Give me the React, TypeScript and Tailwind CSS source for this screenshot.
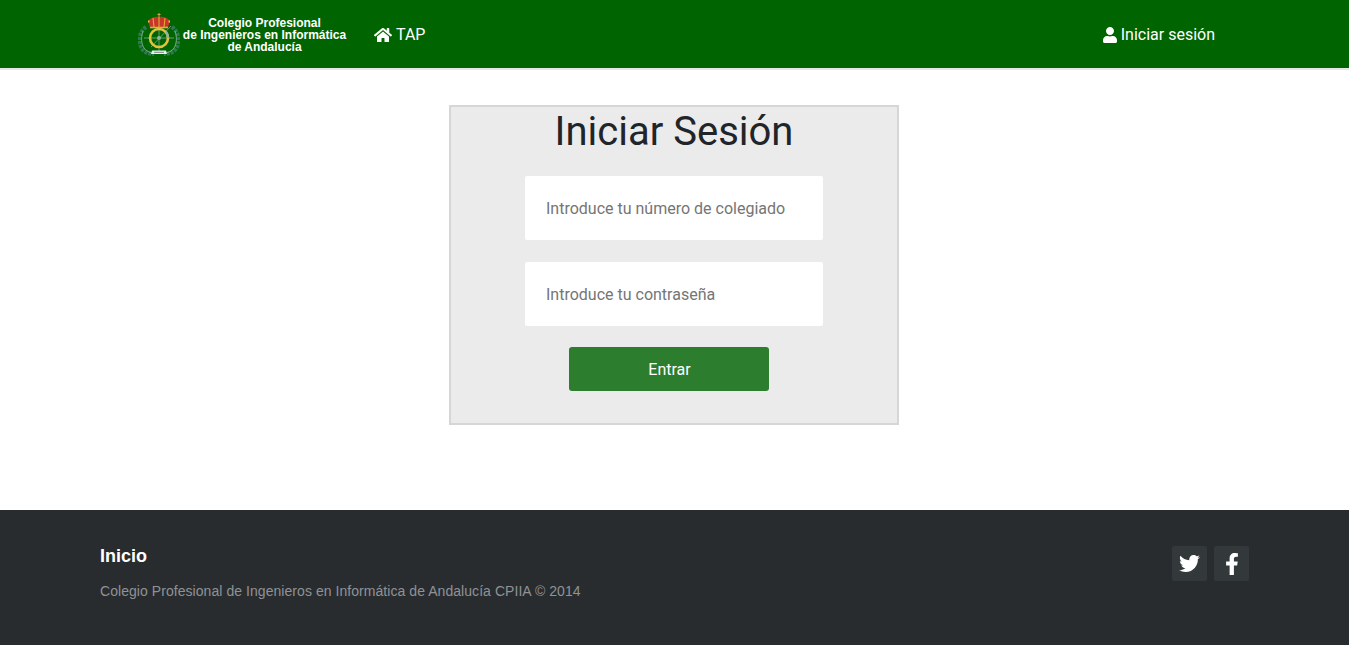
import { FaFacebookF, FaHome, FaTwitter, FaUser } from "react-icons/fa"

function Crest() {
  return (
    <svg width="42" height="44" viewBox="0 0 42 44" fill="none" className="ml-[1px] mt-[1px]">
      {/* laurel */}
      <path d="M8 14C1 19-1 30 5 37c3 3 7 4 11 4" stroke="#2f7a52" strokeWidth="4" strokeDasharray="3 1" />
      <path d="M34 14c7 5 9 16 3 23-3 3-7 4-11 4" stroke="#2f7a52" strokeWidth="4" strokeDasharray="3 1" />
      <path d="M5 18c-2 6-2 12 1 17 2 3 5 4 8 5M37 18c2 6 2 12-1 17-2 3-5 4-8 5" stroke="#9cc4ae" strokeWidth="0.7" />
      {/* crown */}
      <path d="M21 0v4M19.500 1.500h3" stroke="#d8a83a" strokeWidth="1" />
      <path d="M10 8c2-3 7-5 11-4 4-1 9 1 11 4l-2 6.500H12z" fill="#c9352a" />
      <path d="M15 5l1 9M21 4v10M27 5l-1 9" stroke="#dcae34" strokeWidth="1.100" />
      <path d="M10 8.500h1.500M30.500 8.500H32" stroke="#e8c24a" strokeWidth="2" />
      <path d="M12 14.500h18" stroke="#d9b23e" strokeWidth="1.600" />
      {/* ring and crosshair */}
      <path d="M6 25h30M21 14v24M13 34l20-21" stroke="#8fb5a0" strokeWidth="0.7" />
      <circle cx="21" cy="25" r="9" stroke="#e2c23e" strokeWidth="2.600" />
      <path d="M28 19a9 9 0 0 1 2 6" stroke="#8fb5a0" strokeWidth="2.600" />
      <circle cx="21" cy="25" r="2" fill="#8fb5a0" />
      {/* ribbon */}
      <path d="M14 37.500h14l1 3.500H13z" fill="#e9efe9" />
      <path d="M16 39.300h10" stroke="#667" strokeWidth="0.8" />
    </svg>
  )
}

export default function App() {
  return (
    <div className="min-h-screen bg-white font-['Roboto',sans-serif]">
      <header className="h-[70px] bg-[#006400] border-b-2 border-[#e7e7e7] flex items-center text-white">
        <div className="ml-[137px] mr-[134px] w-full flex items-center justify-between">
          <div className="flex items-center">
            <Crest />
            <div className="ml-[2px] w-[165px] pt-[2px] text-center font-['Liberation_Sans',sans-serif] font-bold text-[12px] leading-[12px]">
              <div>Colegio Profesional</div>
              <div>de Ingenieros en Informática</div>
              <div>de Andalucía</div>
            </div>
            <a className="ml-[27px] flex items-center gap-[4px] text-base leading-[26px] pt-[1px]">
              <FaHome className="text-[18px]" />
              TAP
            </a>
          </div>
          <a className="flex items-center gap-[4px] text-base leading-[26px] pt-[1px]">
            <FaUser className="text-[14px] w-[14px] h-[16px]" />
            Iniciar sesión
          </a>
        </div>
      </header>

      <main className="h-[440px] pt-[35px]">
        <div className="ml-[449px] w-[450px] h-[320px] bg-[#ebebeb] border-2 border-[#d6d6d6] flex flex-col items-center">
          <h1 className="text-[40px] leading-[50px] text-[#212529] mb-[19px]">Iniciar Sesión</h1>
          <input
            placeholder="Introduce tu número de colegiado"
            className="w-[298px] h-[64px] bg-white rounded-[2px] pl-[21px] text-base text-[#495057] placeholder:text-[#757575] outline-none mb-[22px]"
          />
          <input
            placeholder="Introduce tu contraseña"
            className="w-[298px] h-[64px] bg-white rounded-[2px] pl-[21px] text-base text-[#495057] placeholder:text-[#757575] outline-none mb-[21px]"
          />
          <button className="w-[200px] h-[44px] -ml-[10px] pt-[1px] pl-[1px] bg-[#2d7d2e] rounded-[3px] text-white text-base">
            Entrar
          </button>
        </div>
      </main>

      <footer className="h-[135px] bg-[#292c2f] px-[100px] pt-[36px] flex justify-between font-['Liberation_Sans',sans-serif]">
        <div>
          <a className="block text-white font-bold text-[18px] leading-[20px]">Inicio</a>
          <p className="mt-[15px] text-[14px] leading-[20px] tracking-[0.055px] text-[#8f9296]">
            Colegio Profesional de Ingenieros en Informática de Andalucía CPIIA © 2014
          </p>
        </div>
        <div className="flex gap-[7px]">
          <a className="w-[35px] h-[35px] bg-[#33383b] rounded-[2px] flex items-center justify-center text-white">
            <FaTwitter className="text-[21px]" />
          </a>
          <a className="w-[35px] h-[35px] bg-[#33383b] rounded-[2px] flex items-center justify-center text-white">
            <FaFacebookF className="text-[22px]" />
          </a>
        </div>
      </footer>
    </div>
  )
}
